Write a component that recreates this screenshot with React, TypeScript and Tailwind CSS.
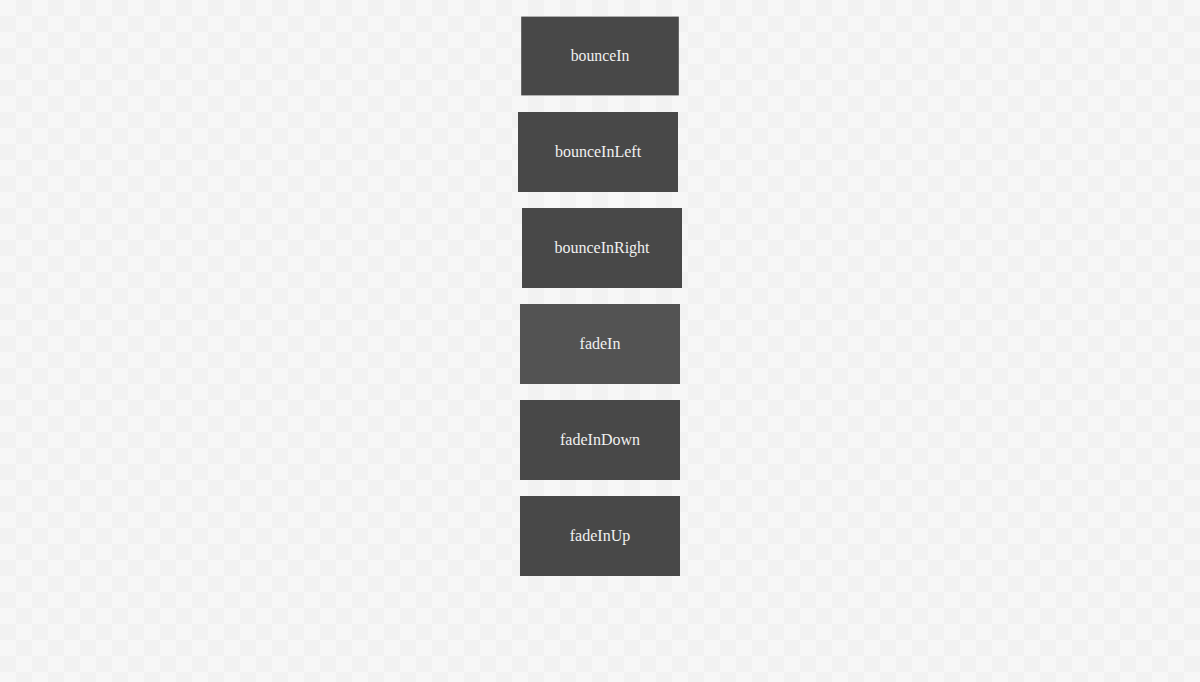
const boxes = [
  { name: "bounceIn", cls: "bg-[#484848] scale-[0.985]" },
  { name: "bounceInLeft", cls: "bg-[#484848] -translate-x-[2px]" },
  { name: "bounceInRight", cls: "bg-[#484848] translate-x-[2px]" },
  { name: "fadeIn", cls: "bg-[#535353]" },
  { name: "fadeInDown", cls: "bg-[#484848]" },
  { name: "fadeInUp", cls: "bg-[#484848]" },
];

export default function App() {
  return (
    <div className="min-h-screen w-full bg-[conic-gradient(#f2f2f2_25%,#f7f7f7_0_50%,#f2f2f2_0_75%,#f7f7f7_0)] bg-size-[32px_32px] pt-[16px] font-['Liberation_Serif',serif]">
      <div className="flex flex-col items-center gap-[16px]">
        {boxes.map((b) => (
          <div
            key={b.name}
            className={`flex h-[80px] w-[160px] items-center justify-center text-[16px] text-[#f0f0f0] ${b.cls}`}
          >
            {b.name}
          </div>
        ))}
      </div>
    </div>
  );
}
